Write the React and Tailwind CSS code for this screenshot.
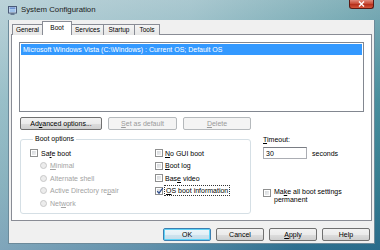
import React from "react";

const U = ({ children }) => <span className="underline underline-offset-[1px]">{children}</span>;

function Btn({ cls, kind = "normal", children }) {
  const base = "h-[13px] flex items-center justify-center rounded-[2px] border shrink-0";
  const k =
    kind === "disabled"
      ? "border-[#b5b9bc] bg-[#f4f4f4] text-[#9a9a9a]"
      : kind === "default"
      ? "border-[#3c7fb1] bg-[linear-gradient(to_bottom,#eef6fa,#e2eff6_50%,#cfe3ee_51%,#c4dce9)] shadow-[inset_0_0_0_1px_#5fd3f7] text-black"
      : "border-[#707070] bg-[linear-gradient(to_bottom,#f2f2f2,#ebebeb_50%,#dddddd_51%,#cfcfcf)] text-black";
  return <div className={`${base} ${k} ${cls}`}>{children}</div>;
}

function Check({ checked }) {
  return (
    <div className="w-[8px] h-[8px] border border-[#8e8f8f] bg-[linear-gradient(135deg,#cdd1d5,#f7f7f7)] shadow-[inset_0_0_0_1px_#ffffff] relative shrink-0">
      {checked && (
        <svg className="absolute left-[0px] top-[-1px]" width="8" height="8" viewBox="0 0 8 8">
          <path d="M1.2 4.2 L3 6.2 L6.8 1" fill="none" stroke="#2a4a8a" strokeWidth="1.2" />
        </svg>
      )}
    </div>
  );
}

function Radio() {
  return <div className="w-[7px] h-[7px] rounded-full border border-[#c8c8c8] bg-[#ececec] shrink-0" />;
}

export default function App() {
  return (
    <div className="w-[380px] h-[250px] overflow-hidden relative font-['Liberation_Sans',Arial,sans-serif] text-[7px] leading-none text-black bg-[linear-gradient(to_bottom,#9fc0c8,#5a9aa8_40%,#3f8296_75%,#2f6a90)]">
      {/* glass tint overlay */}
      <div className="absolute inset-0 bg-[linear-gradient(100deg,rgba(210,225,230,0.55),rgba(190,215,222,0.35)_45%,rgba(40,130,140,0.2)_80%,rgba(30,110,130,0.35))]" />
      {/* close button */}
      <div className="absolute top-0 right-[6px] w-[25px] h-[9px] rounded-b-[3px] border border-t-0 border-[#5a1a14] bg-[linear-gradient(to_bottom,#e08a7c,#c7452f_50%,#b22d1a_51%,#d4553a)] flex items-center justify-center z-10">
        <svg width="7" height="6" viewBox="0 0 7 6">
          <path d="M1 0.5 L6 5.5 M6 0.5 L1 5.5" stroke="#ffffff" strokeWidth="1.4" />
        </svg>
      </div>

      <div className="relative flex flex-col h-full">
        {/* title bar */}
        <div className="h-[20px] flex items-center pl-[8px] gap-[4px] shrink-0">
          <svg width="9" height="9" viewBox="0 0 9 9">
            <rect x="0.5" y="0.5" width="8" height="6.5" fill="#dfe8f2" stroke="#4a5a78" />
            <rect x="1.5" y="1.5" width="6" height="1.2" fill="#3f6fc4" />
            <rect x="1.5" y="3.2" width="6" height="3" fill="#9fc2ea" />
            <rect x="2.5" y="7.5" width="4" height="1.2" fill="#4a5a78" />
          </svg>
          <span className="text-[7.8px] text-[#1a1a1a] -mt-[1px]">System Configuration</span>
        </div>

        {/* client area */}
        <div className="ml-[8px] mr-[5px] h-[224px] bg-[#f0f0f0] border border-[#6c8a9a] border-t-0 flex flex-col px-[2px] shrink-0">
          {/* tabs */}
          <div className="flex items-end h-[14px] pl-[1px] relative z-10">
            <div className="h-[11px] w-[31px] border border-b-0 border-[#898c95] bg-[linear-gradient(to_bottom,#f5f5f5,#e6e6e6)] flex items-center justify-center text-[6.5px] -mb-[1px]">General</div>
            <div className="h-[14px] w-[30px] -ml-px border border-b-0 border-[#898c95] bg-white flex items-center justify-center text-[6.5px] -mb-[1px] relative z-10">Boot</div>
            <div className="h-[11px] w-[33px] -ml-px border border-b-0 border-[#898c95] bg-[linear-gradient(to_bottom,#f5f5f5,#e6e6e6)] flex items-center justify-center text-[6.5px] -mb-[1px]">Services</div>
            <div className="h-[11px] w-[32px] -ml-px border border-b-0 border-[#898c95] bg-[linear-gradient(to_bottom,#f5f5f5,#e6e6e6)] flex items-center justify-center text-[6.5px] -mb-[1px]">Startup</div>
            <div className="h-[11px] w-[26px] -ml-px border border-b-0 border-[#898c95] bg-[linear-gradient(to_bottom,#f5f5f5,#e6e6e6)] flex items-center justify-center text-[6.5px] -mb-[1px]">Tools</div>
          </div>

          {/* tab panel */}
          <div className="h-[187px] border border-[#898c95] bg-white flex flex-col px-[7px] pt-[7px] shrink-0">
            {/* list box */}
            <div className="h-[70px] border border-[#828790] bg-white p-[1px] shrink-0">
              <div className="h-[11px] bg-[#3399ff] text-white flex items-center pl-[2px] text-[7px] whitespace-nowrap">
                Microsoft Windows Vista (C:\Windows) : Current OS; Default OS
              </div>
            </div>

            {/* buttons */}
            <div className="flex gap-[6px] mt-[5px] pl-[1px]">
              <Btn cls="w-[82px]">
                <span>
                  Ad<U>v</U>anced options...
                </span>
              </Btn>
              <Btn cls="w-[69px]" kind="disabled">
                <span>
                  <U>S</U>et as default
                </span>
              </Btn>
              <Btn cls="w-[68px]" kind="disabled">
                <span>
                  <U>D</U>elete
                </span>
              </Btn>
            </div>

            {/* lower area */}
            <div className="flex mt-[5px] pl-[1px]">
              <fieldset className="w-[231px] h-[79px] border border-[#d5dfe5] rounded-[3px] pl-[9px] pt-[4px] shrink-0">
                <legend className="ml-[3px] px-[2px] text-[7px] leading-[8px]">Boot options</legend>
                <div className="grid grid-cols-[125px_1fr] auto-rows-[12.5px]">
                  <div className="flex items-center gap-[3px]">
                    <Check />
                    <span>
                      Sa<U>f</U>e boot
                    </span>
                  </div>
                  <div className="flex items-center gap-[2px]">
                    <Check />
                    <span>
                      <U>N</U>o GUI boot
                    </span>
                  </div>
                  <div className="flex items-center gap-[3px] pl-[10px] text-[#a3a3a3]">
                    <Radio />
                    <span>
                      <U>M</U>inimal
                    </span>
                  </div>
                  <div className="flex items-center gap-[2px]">
                    <Check />
                    <span>
                      <U>B</U>oot log
                    </span>
                  </div>
                  <div className="flex items-center gap-[3px] pl-[10px] text-[#a3a3a3]">
                    <Radio />
                    <span>Alternate shell</span>
                  </div>
                  <div className="flex items-center gap-[2px]">
                    <Check />
                    <span>
                      Bas<U>e</U> video
                    </span>
                  </div>
                  <div className="flex items-center gap-[3px] pl-[10px] text-[#a3a3a3]">
                    <Radio />
                    <span>
                      Active Directory re<U>p</U>air
                    </span>
                  </div>
                  <div className="flex items-center gap-[1px]">
                    <Check checked />
                    <span className="border border-dotted border-[#333] px-[1px] py-[1px]">
                      <U>O</U>S boot information
                    </span>
                  </div>
                  <div className="flex items-center gap-[3px] pl-[10px] text-[#a3a3a3]">
                    <Radio />
                    <span>
                      Net<U>w</U>ork
                    </span>
                  </div>
                </div>
              </fieldset>

              <div className="ml-[12px] flex flex-col">
                <div className="mt-[1px]">
                  <U>T</U>imeout:
                </div>
                <div className="flex items-center mt-[4px]">
                  <div className="w-[44px] h-[12px] border border-[#abadb3] border-t-[#7a7d84] bg-white flex items-center pl-[2px]">30</div>
                  <span className="ml-[5px]">seconds</span>
                </div>
                <div className="flex items-start gap-[3px] mt-[30px]">
                  <Check />
                  <div className="flex flex-col leading-[8px] -mt-[1px]">
                    <span>
                      Ma<U>k</U>e all boot settings
                    </span>
                    <span>permanent</span>
                  </div>
                </div>
              </div>
            </div>
          </div>

          {/* dialog buttons */}
          <div className="flex justify-end gap-[5px] mt-[7px] pr-[2px]">
            <Btn cls="w-[48px]" kind="default">OK</Btn>
            <Btn cls="w-[48px]">Cancel</Btn>
            <Btn cls="w-[48px]">
              <span>
                <U>A</U>pply
              </span>
            </Btn>
            <Btn cls="w-[48px]">Help</Btn>
          </div>
        </div>
      </div>
    </div>
  );
}
